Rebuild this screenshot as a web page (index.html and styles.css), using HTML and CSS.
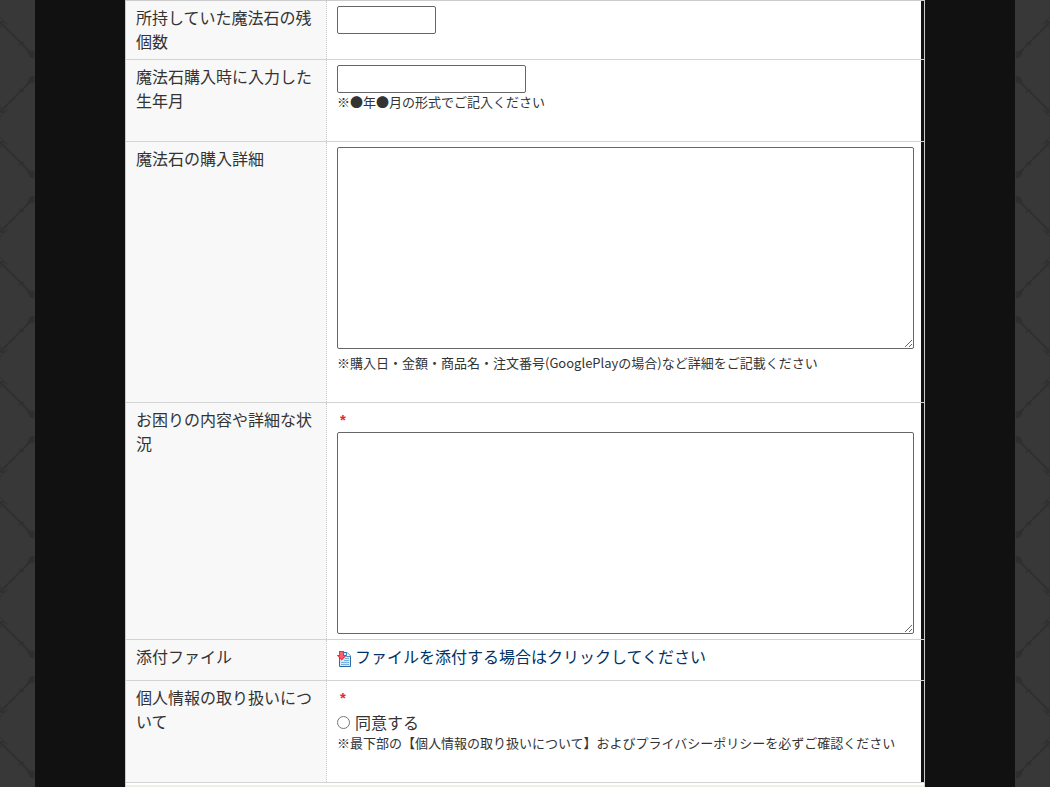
FILE: index.html
```html
<!DOCTYPE html>
<html lang="ja">
<head>
    <meta charset="UTF-8">
    <meta name="viewport" content="width=device-width, initial-scale=1.0">
    <title>お問い合わせ</title>
    <link rel="stylesheet" href="styles.css">
</head>
<body>
    <div class="wrap">
        <form class="inquiry">
            <div class="row">
                <div class="head"><label for="stones">所持していた魔法石の残個数</label></div>
                <div class="data"><input type="text" id="stones" class="short"></div>
            </div>
            <div class="row">
                <div class="head"><label for="birth">魔法石購入時に入力した生年月</label></div>
                <div class="data">
                    <input type="text" id="birth" class="middle">
                    <p class="note">※●年●月の形式でご記入ください</p>
                </div>
            </div>
            <div class="row">
                <div class="head"><label for="purchase">魔法石の購入詳細</label></div>
                <div class="data">
                    <textarea id="purchase"></textarea>
                    <p class="note area-note">※購入日・金額・商品名・注文番号(GooglePlayの場合)など詳細をご記載ください</p>
                </div>
            </div>
            <div class="row">
                <div class="head"><label for="detail">お困りの内容や詳細な状況</label></div>
                <div class="data">
                    <p class="required">*</p>
                    <textarea id="detail"></textarea>
                </div>
            </div>
            <div class="row">
                <div class="head">添付ファイル</div>
                <div class="data attach">
                    <a href="#">
                        <svg class="icon" width="16" height="16" viewBox="0 0 16 16" aria-hidden="true">
                            <path d="M2.5 1.5H10L13.5 5V15.5H2.5Z" fill="#d5eafa" stroke="#2a6da8"/>
                            <path d="M9.5 1.5V5.5H13.5" fill="#fff" stroke="#4b8cc0"/>
                            <path d="M8 7.5H12M7 9.5H12M4 11.5H12M4 13.5H12" stroke="#79b1dc"/>
                            <path d="M2 0H7V4H10L4.8 9.5L0 4.5V4H2Z" fill="#f0303f"/>
                            <path d="M3 1H6V5H7.5L4.8 8L2 5H3Z" fill="#fa6170"/>
                        </svg>
                        <span>ファイルを添付する場合はクリックしてください</span>
                    </a>
                </div>
            </div>
            <div class="row">
                <div class="head">個人情報の取り扱いについて</div>
                <div class="data">
                    <p class="required">*</p>
                    <label class="agree"><input type="radio" name="agree"> 同意する</label>
                    <p class="note">※最下部の【個人情報の取り扱いについて】およびプライバシーポリシーを必ずご確認ください</p>
                </div>
            </div>
            <div class="bottom"></div>
        </form>
    </div>
</body>
</html>
```
FILE: styles.css
```css
* {
    box-sizing: border-box;
}

body {
    margin: 0;
    font-family: "Noto Sans CJK JP", sans-serif;
    font-size: 16px;
    line-height: 24px;
    color: #333;
    background-color: #383838;
    background-image: url("data:image/svg+xml,%3Csvg xmlns='http://www.w3.org/2000/svg' width='120' height='120' viewBox='0 0 120 120'%3E%3Cdefs%3E%3Cg id='a' fill='none' stroke='%232f2f2f'%3E%3Cpath d='M0 0L48 48' stroke-width='2'/%3E%3Cpath d='M42 43L49 45V51L45 50Z' fill='%232f2f2f'/%3E%3Cpath d='M34 38L39 35M34 34L38 38' stroke-width='2'/%3E%3Cpath d='M8 3L22 17M14 14L23 17M15 21L18 13' stroke-width='1'/%3E%3C/g%3E%3C/defs%3E%3Cuse href='%23a'/%3E%3Cuse href='%23a' transform='translate(120 0) scale(-1 1)'/%3E%3Cuse href='%23a' transform='translate(0 120) scale(1 -1)'/%3E%3Cuse href='%23a' transform='translate(120 120) scale(-1 -1)'/%3E%3C/svg%3E");
    background-position: center 7px;
}

p {
    margin: 0;
}

.wrap {
    max-width: 980px;
    min-height: 100vh;
    margin: 0 auto;
    padding: 0 90px;
    background-color: #111;
}

.inquiry {
    border: 1px solid #ccc;
    border-bottom: none;
}

.row {
    display: flex;
    padding-right: 3px;
    border-bottom: 1px solid #d3d3d3;
}

.head {
    flex: 0 0 201px;
    padding: 4px 10px 6px;
    background-color: #f8f8f8;
    border-right: 1px dotted #ccc;
}

.data {
    flex: 1;
    min-width: 0;
    padding: 5px 7px 5px 10px;
    background-color: #fff;
}

input[type="text"],
textarea {
    display: block;
    margin: 0;
    padding: 2px;
    font: inherit;
    background-color: #fff;
    border: 1px solid #666;
    border-radius: 2px;
}

input[type="text"] {
    height: 28px;
}

.short {
    width: 99px;
}

.middle {
    width: 189px;
}

textarea {
    width: 100%;
    height: 202px;
}

.note {
    margin-bottom: 25px;
    font-size: 13px;
    line-height: 18px;
}

.area-note {
    margin-top: 5px;
}

.required {
    padding-left: 3px;
    font-family: "Liberation Sans", sans-serif;
    font-size: 15px;
    font-weight: bold;
    color: #e8263a;
}

.attach {
    padding-top: 4px;
    padding-bottom: 12px;
}

.attach a {
    display: flex;
    align-items: center;
    gap: 2px;
    color: #003366;
    text-decoration: none;
}

.attach a:hover {
    text-decoration: underline;
}

.icon {
    flex: none;
    margin-top: 5px;
}

.agree {
    display: flex;
    align-items: center;
    gap: 5px;
}

.agree input {
    width: 13px;
    height: 13px;
    margin: 0;
}

.bottom {
    height: 4px;
    border-top: 2px solid #fff;
    background-color: #efefe3;
}
```
